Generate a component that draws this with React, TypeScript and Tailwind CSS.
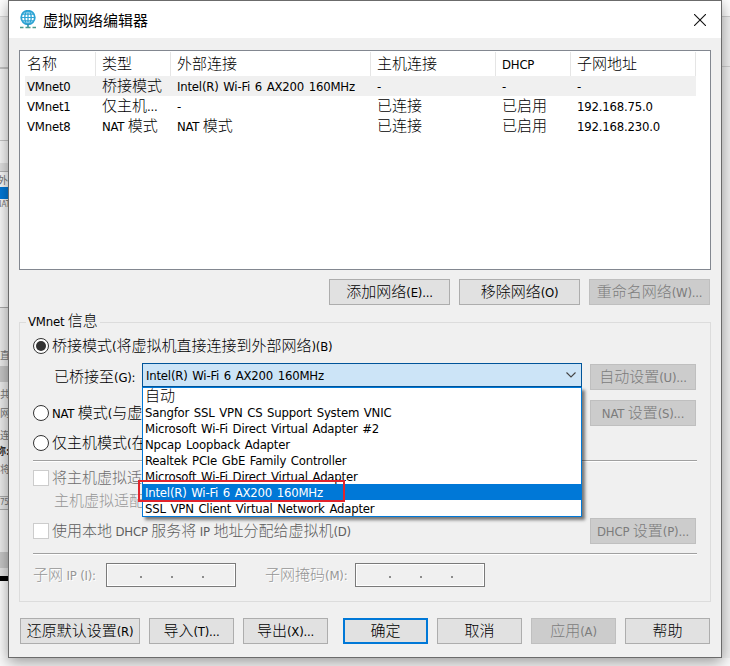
import React from 'react';

const cx = (...parts: (string | false | undefined)[]) => parts.filter(Boolean).join(' ');

const hasHan = (text: string) => /[\u4e00-\u9fff]/.test(text);

// Han characters are set larger and lighter than the Latin text next to them
const Label: React.FC<{ text: string; className?: string }> = ({ text, className }) => (
  <span
    className={cx(
      'inline-flex items-center whitespace-pre leading-none',
      hasHan(text) ? '[word-spacing:0px]' : '[word-spacing:1.2px]',
      className
    )}
  >
    {text.split(/([\u4e00-\u9fff]+)/).filter(Boolean).map((part, i) =>
      hasHan(part) ? (
        <span key={i} className="text-[15px] font-light leading-4">{part}</span>
      ) : (
        <span key={i} className="relative top-px text-[13px] leading-4 tracking-[-0.2px]">{part}</span>
      )
    )}
  </span>
);

interface ButtonProps {
  text: string;
  className: string;
  disabled?: boolean;
  primary?: boolean;
}

const Button: React.FC<ButtonProps> = ({ text, className, disabled, primary }) => (
  <button
    disabled={disabled}
    className={cx(
      'h-[26px] shrink-0 flex items-center justify-center',
      disabled && 'bg-[#cccccc] border border-[#bfbfbf] text-[#7c7c7c]',
      !disabled && 'bg-[#e1e1e1] text-black',
      !disabled && (primary ? 'border-2 border-[#0078d7]' : 'border border-[#adadad]'),
      className
    )}
  >
    <Label text={text} />
  </button>
);

const Radio: React.FC<{ checked?: boolean }> = ({ checked }) => (
  <span className="w-4 h-4 shrink-0 rounded-full border border-[#333333] bg-white flex items-center justify-center">
    {checked && <span className="w-2.5 h-2.5 rounded-full bg-[#333333]" />}
  </span>
);

const Checkbox = () => <span className="w-4 h-4 shrink-0 border border-[#cccccc] bg-white" />;

const Separator: React.FC<{ className: string }> = ({ className }) => (
  <div className={cx('h-0.5 w-[664px] border-t border-[#a0a0a0] bg-white', className)} />
);

const IpInput = () => (
  <div className="w-[130px] h-6 border border-[#7a7a7a] p-px bg-white">
    <div className="h-full bg-[#f0f0f0] flex items-end gap-[29px] pl-8 pb-[7px]">
      <span className="w-0.5 h-0.5 bg-[#8c8c8c]" />
      <span className="w-0.5 h-0.5 bg-[#8c8c8c]" />
      <span className="w-0.5 h-0.5 bg-[#8c8c8c]" />
    </div>
  </div>
);

const columns = ['名称', '类型', '外部连接', '主机连接', 'DHCP', '子网地址'];

const networks = [
  ['VMnet0', '桥接模式', 'Intel(R) Wi-Fi 6 AX200 160MHz', '-', '-', '-'],
  ['VMnet1', '仅主机...', '-', '已连接', '已启用', '192.168.75.0'],
  ['VMnet8', 'NAT 模式', 'NAT 模式', '已连接', '已启用', '192.168.230.0'],
];

const adapters = [
  '自动',
  'Sangfor SSL VPN CS Support System VNIC',
  'Microsoft Wi-Fi Direct Virtual Adapter #2',
  'Npcap Loopback Adapter',
  'Realtek PCIe GbE Family Controller',
  'Microsoft Wi-Fi Direct Virtual Adapter',
  'Intel(R) Wi-Fi 6 AX200 160MHz',
  'SSL VPN Client Virtual Network Adapter',
];

const selected = 6;

const GlobeIcon = () => (
  <svg className="w-5 h-5" viewBox="0 0 20 20" fill="none">
    <circle cx="8" cy="7.500" r="6.800" stroke="#2ba3d4" strokeWidth="1.8" />
    <ellipse cx="8" cy="7.500" rx="3.2" ry="6.800" stroke="#2ba3d4" strokeWidth="1.3" />
    <path d="M8 1v13M1.500 7.500h13M2.500 4.200h11M2.500 10.800h11" stroke="#2ba3d4" strokeWidth="1.200" />
    <path d="M0 17.500h3.500M5.500 17.500h5M12.500 17.500h3.500" stroke="#4a9c8c" strokeWidth="1.5" />
    <path d="M8 14v3" stroke="#2b8aa8" strokeWidth="1.5" />
  </svg>
);

// Sliver of the dialog that sits behind this one
const LeftBackdrop = () => (
  <div className="w-2 shrink-0 overflow-hidden flex flex-col text-[10px] leading-none text-[#777]">
    <div className="h-4 bg-white" />
    <div className="h-[51px] bg-[#f0f0f0] border-t border-[#d8d8d8]" />
    <div className="h-[73px] bg-[#f6f6f6] border-t-2 border-[#c4c4c4]" />
    <div className="h-[23px] bg-[#f6f6f6] border-t border-[#c4c4c4]" />
    <div className="h-2 bg-[#e0e0e0]" />
    <div className="h-4 bg-[#fafafa] pt-1 whitespace-nowrap border-t border-[#b4b4b4]">
      <span className="-ml-0.5">外部</span>
    </div>
    <div className="h-3 bg-[#0078d7]" />
    <div className="h-[108px] bg-[#fafafa] pt-0.5 text-[8px]"><span className="-ml-1">NAT</span></div>
    <div className="h-[59px] bg-[#ececec] pt-[43px] border-t border-[#aaa] whitespace-nowrap">直接</div>
    <div className="h-4 bg-[#c6c6c6]" />
    <div className="h-[114px] bg-[#ececec] pt-2 flex flex-col whitespace-nowrap">
      <span className="h-[19px]">共享</span>
      <span className="h-[22px]">网络</span>
      <span className="h-4">连接</span>
      <span className="h-[18px] -ml-1 font-bold text-[#333]">称:</span>
      <span>将</span>
    </div>
    <div className="h-[14px] bg-[#e6e6e6] border-y border-[#aaa] pt-0.5 text-[8px] tracking-tighter">75</div>
    <div className="h-[42px] bg-[#ececec]" />
    <div className="h-4 bg-[#c6c6c6]" />
    <div className="h-2 bg-[#e4e4e4]" />
    <div className="h-[5px] bg-black" />
    <div className="flex-1 bg-[#fcfcfc]" />
  </div>
);

const RightBackdrop = () => (
  <div className="w-2 shrink-0 flex flex-col bg-[#f0f0f0]">
    <div className="h-4 bg-white" />
    <div className="h-[51px] bg-[#f0f0f0] border-y border-[#d0d0d0]" />
  </div>
);

const App: React.FC = () => {
  return (
    <div className="w-[730px] h-[666px] overflow-hidden bg-[#fafafa] text-black font-['DejaVu_Sans_Condensed','Noto_Sans_CJK_SC',sans-serif]">
      <div className="flex h-[658px]">
        <LeftBackdrop />
        <div className="relative w-[714px] h-[658px] shrink-0 border border-[#6b6b6b] bg-[#f0f0f0] shadow-[0_4px_14px_rgba(0,0,0,0.4)]">
          <header className="h-[37px] bg-white flex items-center justify-between pl-[11px] pr-[15px]">
            <div className="flex items-center gap-[3px]">
              <GlobeIcon />
              <h1 className="text-[15px] leading-5 font-['Noto_Sans_CJK_SC',sans-serif]">虚拟网络编辑器</h1>
            </div>
            <svg className="w-3 h-3" viewBox="0 0 12 12" stroke="#111" strokeWidth="1.1">
              <path d="M0 0L12 12M12 0L0 12" />
            </svg>
          </header>

          <main className="pt-3 pl-2.5">
            <div className="w-[692px] h-[220px] border border-[#828790] bg-white pt-px pl-[5px]">
              <div className="grid grid-cols-[71px_75px_200px_125px_75px_125px] h-6 w-[671px]">
                {columns.map((name) => (
                  <div key={name} className="flex items-center border-r border-[#e5e5e5] pl-1.5 first:pl-0.5">
                    <Label text={name} />
                  </div>
                ))}
              </div>
              {networks.map((row, i) => (
                <div key={row[0]} className={cx('grid grid-cols-[71px_75px_200px_125px_75px_125px] h-5 w-[671px]', i === 0 && 'bg-[#f0f0f0]')}>
                  {row.map((cell, j) => (
                    <div key={j} className="flex items-center pl-1.5 first:pl-0.5">
                      <Label text={cell} />
                    </div>
                  ))}
                </div>
              ))}
            </div>

            <div className="flex gap-[9px] mt-[9px] pl-[310px]">
              <Button text="添加网络(E)..." className="w-[121px]" />
              <Button text="移除网络(O)" className="w-[121px]" />
              <Button text="重命名网络(W)..." className="w-[121px]" disabled />
            </div>

            <section className="relative mt-[17px] w-[692px] h-[280px] border border-[#dcdcdc] pl-[13px]">
              <h2 className="absolute -top-[10px] left-1.5 h-4 w-[74px] px-0.5 bg-[#f0f0f0] flex items-center">
                <Label text="VMnet 信息" />
              </h2>

              <div className="flex items-center gap-[3px] h-4 mt-[15px]">
                <Radio checked />
                <Label text="桥接模式(将虚拟机直接连接到外部网络)(B)" />
              </div>

              <div className="flex items-center mt-[9px] h-7">
                <div className="w-[109px] pl-[21px] flex">
                  <Label text="已桥接至(G):" />
                </div>
                <div className="relative w-[440px] h-6 mb-1 bg-[#cce4f7] border border-[#005499] flex items-center justify-between pl-[3px] pr-[5px]">
                  <Label text={adapters[selected]} />
                  <svg className="w-2.5 h-1.5" viewBox="0 0 10 6" fill="none" stroke="#444" strokeWidth="1.1">
                    <path d="M0.500 0.500L5 5L9.500 0.500" />
                  </svg>
                  <ul className="absolute z-10 top-[23px] -left-px w-[440px] h-[130px] bg-white border border-[#0078d7] shadow-[3px_3px_3px_rgba(0,0,0,0.5)]">
                    {adapters.map((name, i) => (
                      <li key={i} className={cx('h-4 flex items-center pl-0.5', i === selected && 'bg-[#0078d7] text-white')}>
                        <Label text={name} />
                      </li>
                    ))}
                  </ul>
                  <div className="absolute z-20 top-[116px] -left-[5px] w-[207px] h-[22px] border-2 border-[#e2242c]" />
                </div>
                <Button text="自动设置(U)..." className="ml-2 w-[106px]" disabled />
              </div>

              <div className="flex items-center justify-between w-[663px] h-[26px] mt-[9px]">
                <div className="flex items-center gap-[3px]">
                  <Radio />
                  <Label text="NAT 模式(与虚" />
                </div>
                <Button text="NAT 设置(S)..." className="w-[106px]" disabled />
              </div>

              <div className="flex items-center gap-[3px] h-4 mt-[9px]">
                <Radio />
                <Label text="仅主机模式(在" />
              </div>

              <Separator className="mt-[9px]" />

              <div className="flex items-center gap-[3px] h-4 mt-2 text-[#6d6d6d]">
                <Checkbox />
                <Label text="将主机虚拟适" />
              </div>
              <div className="flex items-center h-4 mt-[7px] pl-[21px] text-[#969696]">
                <Label text="主机虚拟适配" />
              </div>

              <div className="flex items-center justify-between w-[663px] h-[26px] mt-[9px] text-[#5d5d5d]">
                <div className="flex items-center gap-[3px]">
                  <Checkbox />
                  <Label text="使用本地 DHCP 服务将 IP 地址分配给虚拟机(D)" />
                </div>
                <Button text="DHCP 设置(P)..." className="w-[106px]" disabled />
              </div>

              <Separator className="mt-[9px]" />

              <div className="flex items-center mt-2 h-6 text-[#969696] text-shadow-[1px_1px_0_#fff]">
                <div className="w-[73px] flex"><Label text="子网 IP (I):" /></div>
                <IpInput />
                <div className="w-[119px] pl-[29px] flex"><Label text="子网掩码(M):" /></div>
                <IpInput />
              </div>
            </section>

            <footer className="flex gap-[9px] mt-4 pl-px">
              <Button text="还原默认设置(R)" className="w-[120px]" />
              <Button text="导入(T)..." className="w-[85px]" />
              <Button text="导出(X)..." className="w-[85px]" />
              <Button text="确定" className="ml-1.5 w-[85px]" primary />
              <Button text="取消" className="w-[85px]" />
              <Button text="应用(A)" className="w-[85px]" disabled />
              <Button text="帮助" className="w-[85px]" />
            </footer>
          </main>
        </div>
        <RightBackdrop />
      </div>
    </div>
  );
};

export default App;
